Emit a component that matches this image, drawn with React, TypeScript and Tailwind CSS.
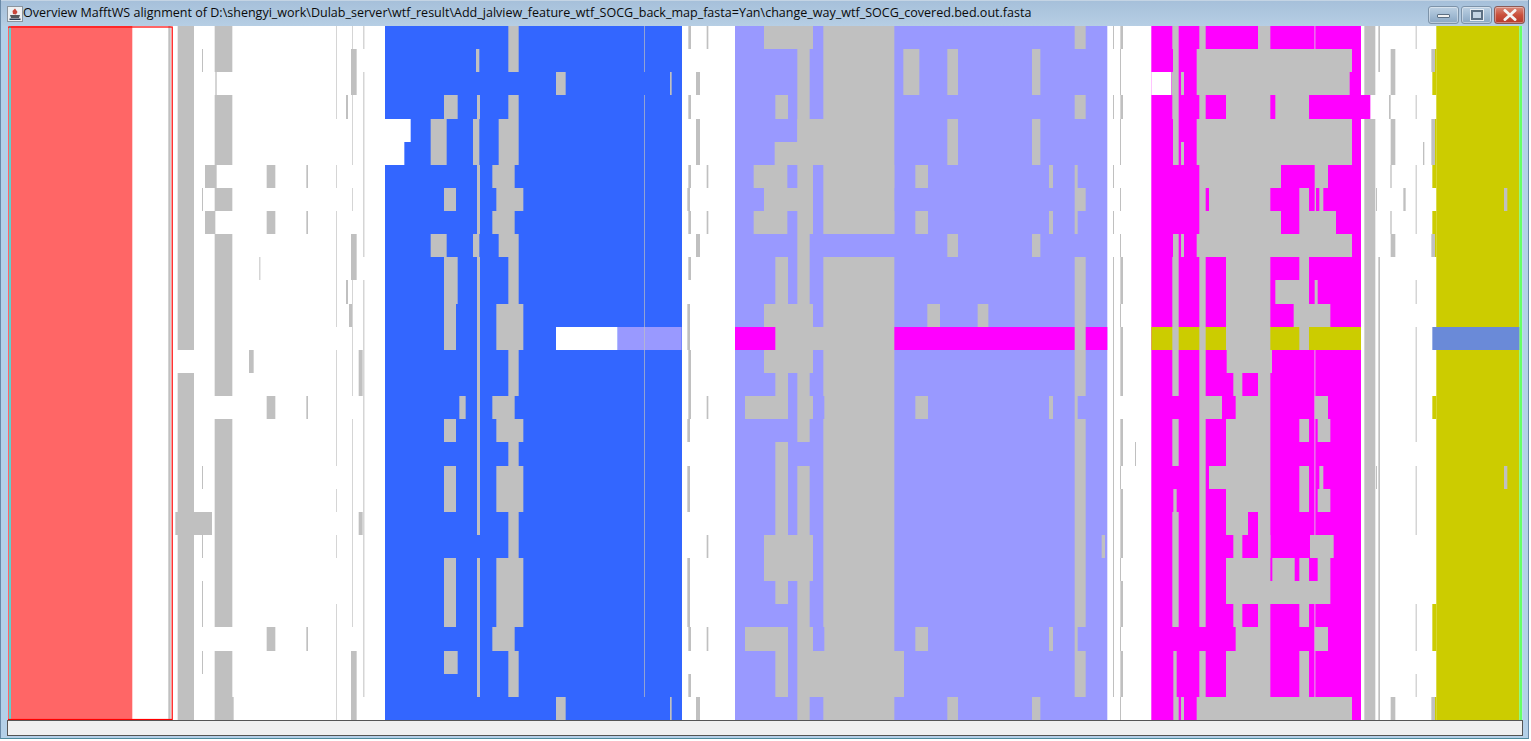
import React from "react";

const H = 694 / 30;
const Y0 = 26;
const GRAY = "#c0c0c0";

type Span = [string, number, number];

function parseRows(s: string): number[] {
  const out: number[] = [];
  s.split(",").forEach((p) => {
    const [a, b] = p.split("-").map(Number);
    for (let i = a; i <= (b === undefined ? a : b); i++) out.push(i);
  });
  return out;
}

function Rects({ off, spans, fill }: { off: number; spans: Span[]; fill: string }) {
  return (
    <>
      {spans.flatMap(([rows, z1, z2], i) =>
        parseRows(rows).map((r) => {
          const top = Math.round(Y0 + r * H);
          const bottom = Math.round(Y0 + (r + 1) * H);
          return (
            <rect
              key={`${i}-${r}`}
              x={off + z1 / 3}
              y={top}
              width={(z2 - z1) / 3}
              height={bottom - top}
              fill={fill}
            />
          );
        })
      )}
    </>
  );
}

// first white column + blue column, zoom origin x=170
const s1: Span[] = [
  ["0-13,15-20,22-29", 23, 72],
  ["21", 16, 126],
  ["0-1,3-5,7,9-15,17-25,27-28", 134, 187],
  ["2", 136, 140],
  ["6", 105, 140],
  ["8", 105, 136],
  ["29", 134, 191],
  ["1,7,19,22,24-25,27", 96, 99],
  ["6,8,16,26", 290, 316],
  ["6,8,16,26", 409, 414],
  ["10", 268, 271],
  ["14", 237, 251],
  ["0-3,6,8-12,14-18,20,22,25-29", 499, 501],
  ["0,3-5,7,11,13-15,17-25", 547, 549],
  ["1-2,9-10,27-29", 543, 560],
  ["3,11", 528, 534],
  ["12", 537, 548],
  ["14-15,21", 566, 578],
  ["0,2-9,11-28", 580, 583],
  // blue column
  ["2,29", 1158, 1187],
  ["2,29", 1500, 1505],
  ["0-1,3-28", 1423, 1425],
  ["0-1,3,10-11,14-15,18,21-22,27-28", 1015, 1046],
  ["4-5,9", 986, 1046],
  ["6,8,16,26", 967, 1034],
  ["7,12-13,17,19-20,23-25", 979, 1060],
  ["3,10-11,27", 822, 863],
  ["4-5,9", 782, 830],
  ["7,12-13,17,19-20,23-25", 822, 858],
  ["16", 868, 887],
  ["1", 918, 928],
  ["3,6-8,10-21,23-28", 921, 930],
  ["4-5,9", 909, 928],
];

// second white column + lavender column, zoom origin x=680
const s2: Span[] = [
  ["0,3,6,8,10,14-16,26,28", 25, 33],
  ["7,12-13,17,19-20,23-25", 22, 30],
  ["0,6,8,16,22,26", 80, 85],
  ["2,4-5,9,29", 48, 60],
  ["0-8,10-15,17-25,29", 430, 643],
  ["6,8,16,26", 433, 643],
  ["27-28", 352, 672],
  ["0,7,12,14,22-23", 252, 399],
  ["1-4,9-11,15,17,19-21,24-25,29", 352, 389],
  ["3,10-11,15,18-21,24,27-28", 286, 324],
  ["4", 352, 440],
  ["5", 284, 440],
  ["6,8", 221, 322],
  ["6,8,16,26", 352, 399],
  ["13", 286, 440],
  ["16,26", 195, 324],
  ["1-2", 670, 718],
  ["1-2,4-5,9,29", 802, 834],
  ["1-2,4-5,9,29", 1056, 1081],
  ["6,8,16,26", 706, 744],
  ["12", 742, 780],
  ["12", 893, 925],
  ["6,8,16,26", 1107, 1119],
  ["0,3,7,10-15,17-25,27-28", 1184, 1217],
  ["6,8,16,26", 1184, 1193],
  ["22", 1265, 1275],
  ["0,3,6,8,10-28", 1299, 1302],
  ["0,3,10-11,13-15,17-18,20-22,24-25,27-28", 1321, 1329],
  ["1-2,4-5,7,9,12,19,23,26,29", 1320, 1323],
  ["18", 1365, 1368],
];

// magenta column + third white column + yellow column, zoom origin x=1140
const s3: Span[] = [
  ["0,3,10-15,17-18,21-25", 97, 116],
  ["1,4-5,9", 99, 116],
  ["2", 95, 116],
  ["2,5,9,29", 123, 132],
  ["20,27-28", 100, 110],
  ["29", 100, 116],
  ["0,3,7,10-15,17-25,27-28", 178, 197],
  ["0,15,21-22,25", 354, 391],
  ["1,4-5,9,29", 170, 636],
  ["2", 170, 629],
  ["3,10-13,17-18,20,23,27-28", 258, 391],
  ["3,11", 406, 507],
  ["6", 178, 423],
  ["6,16,26", 524, 564],
  ["7,19", 207, 391],
  ["7,10,13,17,19-20,23,25,27-28", 478, 507],
  ["7", 524, 528],
  ["7,19", 538, 550],
  ["8", 178, 423],
  ["8", 478, 588],
  ["11", 524, 533],
  ["12", 461, 571],
  ["14", 260, 396],
  ["15,22,25", 280, 307],
  ["16", 178, 246],
  ["16,26", 287, 391],
  ["17,20,23", 533, 571],
  ["21", 258, 324],
  ["22", 354, 391],
  ["22", 510, 581],
  ["23", 397, 464],
  ["24", 258, 571],
  ["0-2,4-29", 673, 706],
  ["0-1,10-29", 715, 720],
  ["1-2,4-5,9,29", 752, 766],
  ["3", 747, 752],
  ["6,8", 751, 755],
  ["7", 790, 797],
  ["7,19", 708, 711],
  ["0,3,6-8,11,13-17,19-21,25-26,28", 827, 830],
  ["5", 849, 853],
  ["1,4-5,9,29", 874, 885],
  ["7,19", 1092, 1102],
];

const magentaLine: Span[] = [["0,14-21,25-28", 522, 527]];

function Overview() {
  return (
    <svg
      className="block h-[694px] w-[1516px] shrink-0 blur-[0.3px]"
      viewBox="8 26 1516 694"
      aria-label="Alignment overview"
    >
      <rect x="8" y="26" width="1516" height="694" fill="#ffffff" />

      {/* annotation colour columns */}
      <rect x="9" y="26" width="2" height="694" fill="#66cccc" />
      <rect x="11" y="26" width="121.3" height="694" fill="#ff6666" />
      <rect x="168.3" y="26" width="2.4" height="694" fill={GRAY} />

      <rect x="385" y="26" width="297" height="694" fill="#3366ff" />
      <rect x="735" y="26" width="372.3" height="694" fill="#9999ff" />
      <rect x="1151.3" y="26" width="209.7" height="694" fill="#ff00ff" />
      <rect x="1436.3" y="26" width="83" height="694" fill="#cccc00" />
      <rect x="1519.3" y="26" width="3" height="694" fill="#66ff66" />
      <rect x="1522.3" y="26" width="2" height="694" fill="#b0d4ea" />

      {/* row overrides */}
      <Rects off={170} fill="#ffffff" spans={[["4", 645, 722], ["5", 645, 703], ["13", 1158, 1343]]} />
      <Rects off={170} fill="#9999ff" spans={[["13", 1343, 1535]]} />
      <Rects off={680} fill="#ff00ff" spans={[["13", 165, 1282]]} />
      <Rects off={1140} fill="#ffffff" spans={[["2", 34, 94]]} />
      <Rects off={1140} fill="#ff00ff" spans={[["3", 663, 691]]} />
      <Rects off={1140} fill="#cccc00" spans={[["13", 34, 663], ["2,6,8,16,25-26", 877, 889], ["1,4-5,9,29", 885, 889]]} />
      <Rects off={1140} fill="#6a8ad8" spans={[["13", 877, 1138]]} />
      <Rects off={1140} fill="#ee66ee" spans={magentaLine} />

      <Rects off={170} fill={GRAY} spans={s1} />
      <Rects off={680} fill={GRAY} spans={s2} />
      <Rects off={1140} fill={GRAY} spans={s3} />

      {/* selection box */}
      <rect x="8" y="27" width="164.2" height="692.5" fill="none" stroke="#ff0000" strokeWidth="1.2" />
    </svg>
  );
}

function AppIcon() {
  return (
    <svg width="16" height="16" viewBox="0 0 16 16" className="shrink-0">
      <rect x="0.5" y="0.5" width="15" height="15" fill="#eef0f2" stroke="#8a949e" />
      <path d="M8 2.5 L10.5 6 L9 8.5 L6 8 L5.5 5 Z" fill="#c8463a" />
      <path d="M3 9 L13 9 L12 12 L4 12 Z" fill="#55585c" />
      <rect x="2.5" y="12.5" width="11" height="1.5" fill="#2e3b52" />
    </svg>
  );
}

function WinButton({ kind }: { kind: "min" | "max" | "close" }) {
  if (kind === "close") {
    return (
      <div className="flex h-[18px] w-[31px] items-center justify-center rounded-[3px] border border-[#8c5a55] bg-gradient-to-b from-[#d98a7c] via-[#c9503c] to-[#b83a2c] shadow-[inset_0_0_0_1px_rgba(255,255,255,0.35)]">
        <svg width="14" height="12" viewBox="0 0 14 12">
          <path d="M2 1.5 L12 10.5 M12 1.5 L2 10.5" stroke="#f4f4f4" strokeWidth="3" strokeLinecap="round" />
        </svg>
      </div>
    );
  }
  return (
    <div className="flex h-[18px] w-[31px] items-center justify-center rounded-[3px] border border-[#7d93a9] bg-gradient-to-b from-[#bdd0e2] via-[#a3bcd4] to-[#8aa7c3] shadow-[inset_0_0_0_1px_rgba(255,255,255,0.4)]">
      {kind === "min" ? (
        <div className="mt-[3px] h-[4px] w-[13px] rounded-[1px] border border-[#5c6f82] bg-[#f2f2f2]" />
      ) : (
        <div className="h-[10px] w-[12px] border-2 border-[#5c6f82] bg-[#c4d4e3] outline outline-1 outline-[#e8eef4]" />
      )}
    </div>
  );
}

export default function App() {
  return (
    <div className="flex h-[739px] w-[1529px] flex-col overflow-hidden border-x border-b border-x-[#6a8aa8] border-b-[#4f8a9c] bg-[#b4d0e8] font-['Open_Sans','Noto_Sans',sans-serif]">
      <div className="flex h-[26px] shrink-0 items-center border-t border-[#c4d4e4] bg-gradient-to-b from-[#a6c0da] to-[#b6cee4] pl-[6px] pr-[3px]">
        <AppIcon />
        <span className="whitespace-nowrap text-[12.54px] leading-none text-[#0a0a0a]">
          {"Overview MafftWS alignment of D:\\shengyi_work\\Dulab_server\\wtf_result\\Add_jalview_feature_wtf_SOCG_back_map_fasta=Yan\\change_way_wtf_SOCG_covered.bed.out.fasta"}
        </span>
        <div className="ml-auto mt-[2px] flex items-center gap-[2px]">
          <WinButton kind="min" />
          <WinButton kind="max" />
          <WinButton kind="close" />
        </div>
      </div>
      <div className="flex flex-1 flex-col pl-[7px]">
        <Overview />
        <div className="-ml-[1px] h-[16px] w-[1516px] shrink-0 border border-[#555555] bg-[#f0f0f0]" />
      </div>
    </div>
  );
}
